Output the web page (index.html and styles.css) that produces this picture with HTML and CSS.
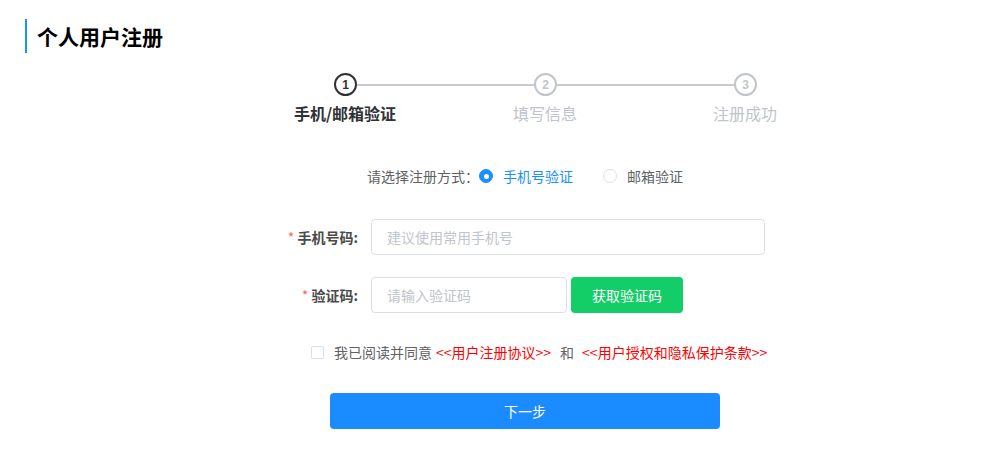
FILE: index.html
```html
<!DOCTYPE html>
<html lang="zh-CN">
<head>
<meta charset="utf-8">
<title>个人用户注册</title>
<link rel="stylesheet" href="styles.css">
</head>
<body>
<div class="page">
  <h1 class="title">个人用户注册</h1>

  <div class="steps-line">
    <span class="step-dot active">1</span>
    <span class="step-bar"></span>
    <span class="step-dot">2</span>
    <span class="step-bar"></span>
    <span class="step-dot">3</span>
  </div>
  <div class="steps-labels">
    <span class="step-label active">手机/邮箱验证</span>
    <span class="step-label">填写信息</span>
    <span class="step-label">注册成功</span>
  </div>

  <div class="mode-row">
    <span class="mode-title">请选择注册方式：</span>
    <label class="radio checked"><span class="radio-dot"></span><span class="radio-text">手机号验证</span></label>
    <label class="radio"><span class="radio-dot"></span><span class="radio-text">邮箱验证</span></label>
  </div>

  <div class="field-row first">
    <span class="field-label"><span class="req">*</span> 手机号码:</span>
    <div class="field-control">
      <div class="input wide"><span class="placeholder">建议使用常用手机号</span></div>
    </div>
  </div>

  <div class="field-row">
    <span class="field-label"><span class="req">*</span> 验证码:</span>
    <div class="field-control">
      <div class="input narrow"><span class="placeholder">请输入验证码</span></div>
      <button class="btn-code">获取验证码</button>
    </div>
  </div>

  <div class="agree-row">
    <span class="checkbox"></span>
    <span class="agree-text">我已阅读并同意</span>
    <span class="link">&lt;&lt;用户注册协议&gt;&gt;</span>
    <span class="and">和</span>
    <span class="link">&lt;&lt;用户授权和隐私保护条款&gt;&gt;</span>
  </div>

  <button class="btn-next">下一步</button>
</div>
</body>
</html>
```

FILE: styles.css
```css
* {
  box-sizing: border-box;
}

html, body {
  margin: 0;
  padding: 0;
  background: #ffffff;
}

body {
  font-family: "Noto Sans CJK SC", "Noto Sans", "Liberation Sans", sans-serif;
  color: #606266;
  font-size: 14px;
}

.page {
  width: 998px;
  height: 452px;
  overflow: hidden;
  padding-top: 19px;
}

.title {
  margin: 0 0 0 25px;
  height: 34px;
  line-height: 34px;
  border-left: 2px solid #1890ff;
  padding-left: 10px;
  font-size: 21px;
  font-weight: bold;
  color: #000000;
}

/* steps */
.steps-line {
  display: flex;
  align-items: center;
  margin-top: 20px;
  padding-left: 334px;
}

.step-dot {
  width: 23px;
  height: 23px;
  border-radius: 50%;
  border: 2px solid #c0c4cc;
  color: #c0c4cc;
  font-family: "Liberation Sans", "Noto Sans", sans-serif;
  font-weight: bold;
  font-size: 12px;
  display: flex;
  align-items: center;
  justify-content: center;
  flex: none;
}

.step-dot.active {
  border-color: #303133;
  color: #303133;
}

.step-bar {
  width: 177px;
  height: 2px;
  background: #cbc8d6;
  flex: none;
}

.steps-labels {
  display: grid;
  grid-template-columns: 200px 200px 200px;
  margin-top: 6px;
  padding-left: 245px;
}

.step-label {
  text-align: center;
  font-size: 16px;
  line-height: 22px;
  color: #c0c4cc;
}

.step-label.active {
  color: #303133;
  font-weight: bold;
}

/* registration mode */
.mode-row {
  display: flex;
  align-items: center;
  margin-top: 42px;
  padding-left: 367px;
  height: 20px;
  line-height: 20px;
}

.mode-title {
  color: #606266;
}

.radio {
  display: flex;
  align-items: center;
  margin-right: 30px;
  color: #606266;
}

.radio-dot {
  width: 14px;
  height: 14px;
  border-radius: 50%;
  border: 1px solid #dcdfe6;
  background: #fff;
  margin-right: 10px;
  position: relative;
}

.radio.checked .radio-dot {
  background: #1890ff;
  border-color: #1890ff;
}

.radio.checked .radio-dot::after {
  content: "";
  position: absolute;
  left: 50%;
  top: 50%;
  width: 5px;
  height: 5px;
  margin: -2.5px 0 0 -2.5px;
  border-radius: 50%;
  background: #fff;
}

.radio.checked .radio-text {
  color: #1890ff;
}

/* fields */
.field-row {
  display: grid;
  grid-template-columns: 358px auto;
  column-gap: 13px;
  align-items: center;
  margin-top: 22px;
}

.field-row.first {
  margin-top: 33px;
}

.field-label {
  text-align: right;
  font-weight: bold;
  color: #4a4a4a;
}

.req {
  color: #f56c6c;
  font-weight: normal;
}

.field-control {
  display: flex;
  gap: 4px;
}

.input {
  height: 36px;
  border: 1px solid #dcdfe6;
  border-radius: 4px;
  padding-left: 15px;
  display: flex;
  align-items: center;
}

.input.wide {
  width: 394px;
}

.input.narrow {
  width: 196px;
}

.placeholder {
  color: #c0c4cc;
}

.btn-code {
  width: 112px;
  height: 36px;
  border: none;
  border-radius: 4px;
  background: #13ce66;
  color: #ffffff;
  font-family: inherit;
  font-size: 14px;
  padding: 0;
}

/* agreement */
.agree-row {
  display: flex;
  align-items: center;
  margin-top: 29px;
  padding-left: 311px;
  height: 20px;
  line-height: 20px;
}

.checkbox {
  width: 13px;
  height: 13px;
  border: 1px solid #dcdfe6;
  border-radius: 2px;
  margin-right: 10px;
}

.agree-text {
  color: #606266;
  margin-right: 4px;
}

.link {
  color: #ff0000;
}

.and {
  color: #606266;
  margin: 0 8px 0 9px;
}

.btn-next {
  display: block;
  margin: 31px 0 0 330px;
  width: 390px;
  height: 36px;
  border: none;
  border-radius: 4px;
  background: #1a8cff;
  color: #ffffff;
  font-family: inherit;
  font-size: 14px;
  padding: 0;
}
```
